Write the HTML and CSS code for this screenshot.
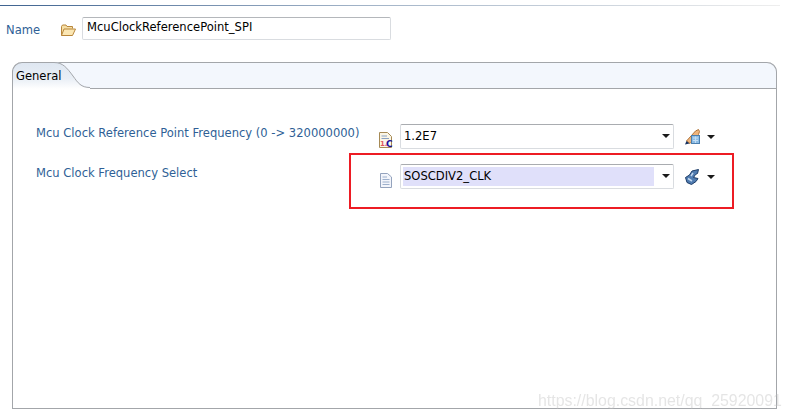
FILE: index.html
```html
<!DOCTYPE html>
<html lang="en">
<head>
<meta charset="utf-8">
<title>McuClockReferencePoint_SPI</title>
<link rel="stylesheet" href="styles.css">
</head>
<body>
<div class="topline"></div>
<div class="name-row">
  <span class="name-label">Name</span>
  <svg class="folder" width="16" height="14" viewBox="0 0 16 14"><path d="M1.500 12.500V3.500L2.500 2H6L7 3.500H12.500V5.500" fill="#f6dfa6" stroke="#b8863a"/><path d="M1.500 12.500L4 6H15.500L12.500 12.500Z" fill="#fbe7b4" stroke="#b8863a"/></svg>
  <div class="name-input">McuClockReferencePoint_SPI</div>
</div>
<section class="panel">
  <header class="tabbar">
    <div class="tab">General</div>
    <svg class="tab-curve" width="38" height="27" viewBox="0 0 38 27"><defs><linearGradient id="tabfade" x1="0" y1="0" x2="0" y2="1"><stop offset="0" stop-color="#dfe7f1"/><stop offset="0.6" stop-color="#e8eef5"/><stop offset="1" stop-color="#ffffff"/></linearGradient></defs><path d="M0 0H2C11 0 15 6 21 14C26 21 29 26 38 26V27H0Z" fill="url(#tabfade)"/><path d="M0 0.500H2C11 0.500 15 6 21 14C26 21 29 25.500 38 25.500" fill="none" stroke="#a3a6aa"/></svg>
    <div class="tab-rest"></div>
  </header>
  <div class="form">
    <div class="row">
      <span class="row-label">Mcu Clock Reference Point Frequency (0 -&gt; 320000000)</span>
      <svg class="file-icon" width="16" height="18" viewBox="0 0 16 18"><path d="M1.500 1.500H9.500L13.500 5.500V16.500H1.500Z" fill="#fbf6e6" stroke="#a68a55"/><path d="M3.500 5H9M3.500 7.500H11" stroke="#8aa2c4"/><text x="2" y="15" class="icon-one">1.</text><text x="8" y="16" class="icon-c">C</text></svg>
      <div class="combo"><span class="combo-value">1.2E7</span><span class="arrow"></span></div>
      <svg class="tool-icon" width="18" height="18" viewBox="0 0 18 18"><path d="M2.500 13L11.500 3L14.500 1.500L15.500 3.500L14.500 6.500L6 15.500Z" fill="#efb47c" stroke="#b0763c"/><path d="M1 16.500L2.500 13L5.500 15.500Z" fill="#14305f"/><rect x="7.500" y="7.500" width="8" height="8" fill="#8dbde6" stroke="#4c7fae"/><path d="M9 10H14M9 12.500H14M11.500 8.500V15" stroke="#c4dff5"/></svg>
      <span class="arrow"></span>
    </div>
    <div class="row row-selected">
      <span class="row-label">Mcu Clock Frequency Select</span>
      <svg class="file-icon" width="16" height="18" viewBox="0 0 16 18"><path d="M2.500 2.500H9.500L13.500 6V16.500H2.500Z" fill="#f3f5fb" stroke="#94a3bd"/><path d="M4.500 6H9M4.500 8.500H11.500M4.500 11H11.500M4.500 13.500H11.500" stroke="#9db0cc"/></svg>
      <div class="combo"><span class="combo-value combo-selected">SOSCDIV2_CLK</span><span class="arrow"></span></div>
      <svg class="tool-icon" width="18" height="18" viewBox="0 0 18 18"><path d="M14.500 1.500L8 3L5.500 7L1.500 9.500L3 14.500L7.500 16.500L12 13.500L14 10.500L9.500 9.500L11.500 6.500L13.500 5.500Z" fill="#4f7bb0" stroke="#1d3d68"/><path d="M4 10.500L8 13M9 5L7 8" stroke="#c0d6ee" stroke-width="1.500"/></svg>
      <span class="arrow"></span>
    </div>
    <div class="highlight"></div>
  </div>
</section>
<div class="watermark">https://blog.csdn.net/qq_25920091</div>
</body>
</html>
```

FILE: styles.css
```css
html, body {
  margin: 0;
  padding: 0;
  width: 789px;
  height: 419px;
  overflow: hidden;
  background: #fff;
  font-family: "DejaVu Sans", sans-serif;
  font-size: 11.55px;
  color: #000;
}
body {
  position: relative;
}
.topline {
  height: 1px;
  margin: 5px 9px 0 0;
  background: linear-gradient(to right, #3f6390 0%, #9fb1c6 45%, #eeeeee 100%);
}
.name-row {
  display: flex;
  align-items: center;
  height: 24px;
  margin-top: 10px;
  padding-left: 6px;
}
.name-label {
  width: 54px;
  color: #2f5f96;
  padding-top: 3px;
}
.folder {
  margin-right: 6px;
  margin-top: 3px;
}
.name-input {
  width: 303px;
  height: 21px;
  line-height: 19px;
  padding-left: 4px;
  border: 1px solid #d9dce0;
  border-top-color: #b4b7bb;
  border-radius: 2px;
}
.panel {
  position: relative;
  width: 763px;
  height: 346px;
  margin: 22px 0 0 12px;
  border: 1px solid #a3a6aa;
  border-top: 0;
  border-radius: 10px 10px 0 0;
}
.tabbar {
  display: flex;
  height: 27px;
  margin: 0 -1px;
}
.tab {
  flex: none;
  width: 40px;
  height: 27px;
  padding-left: 3px;
  line-height: 26px;
  white-space: nowrap;
  background: linear-gradient(to bottom, #dfe7f1 0%, #e8eef5 60%, #ffffff 100%);
  border-top: 1px solid #a3a6aa;
  border-left: 1px solid #a3a6aa;
  border-radius: 10px 0 0 0;
  box-sizing: border-box;
  position: relative;
  z-index: 2;
}
.tab-curve {
  flex: none;
  position: relative;
  z-index: 1;
}
.tab-rest {
  flex: 1;
  background: #f3f7fd;
  border-top: 1px solid #a3a6aa;
  border-right: 1px solid #a3a6aa;
  border-bottom: 1px solid #a3a6aa;
  border-radius: 0 10px 0 0;
  box-sizing: border-box;
  margin-left: -38px;
}
.form {
  position: relative;
  padding: 35px 0 0 23px;
}
.row {
  display: flex;
  align-items: center;
  height: 25px;
  margin-bottom: 15px;
}
.row-label {
  width: 342px;
  color: #2f5f96;
  white-space: nowrap;
  align-self: flex-start;
  padding-top: 2px;
}
.file-icon {
  margin-right: 6px;
  margin-top: 6px;
}
.combo {
  display: flex;
  align-items: center;
  justify-content: space-between;
  box-sizing: border-box;
  width: 274px;
  height: 25px;
  padding: 1px 3px 2px 2px;
  border: 1px solid #d9dce0;
  border-top-color: #a9acb0;
  border-radius: 2px;
  margin-right: 10px;
}
.combo-value {
  padding-left: 1px;
}
.combo-selected {
  width: 250px;
  height: 19px;
  line-height: 18px;
  background: #e0e0fa;
}
.arrow {
  width: 0;
  height: 0;
  border-left: 4px solid transparent;
  border-right: 4px solid transparent;
  border-top: 4px solid #1a1a1a;
}
.tool-icon {
  margin-right: 5px;
}
.icon-one {
  font-size: 7px;
  font-weight: bold;
  fill: #e0555f;
}
.icon-c {
  font-size: 9px;
  font-weight: bold;
  fill: #1a0a9a;
}
.highlight {
  position: absolute;
  left: 336px;
  top: 64px;
  width: 381px;
  height: 52px;
  border: 2px solid #ed1c24;
}
.watermark {
  position: absolute;
  left: 538px;
  top: 392px;
  font-family: "Liberation Sans", sans-serif;
  font-size: 15.9px;
  color: rgba(190, 190, 190, 0.4);
  white-space: nowrap;
  filter: blur(0.4px);
}
```
